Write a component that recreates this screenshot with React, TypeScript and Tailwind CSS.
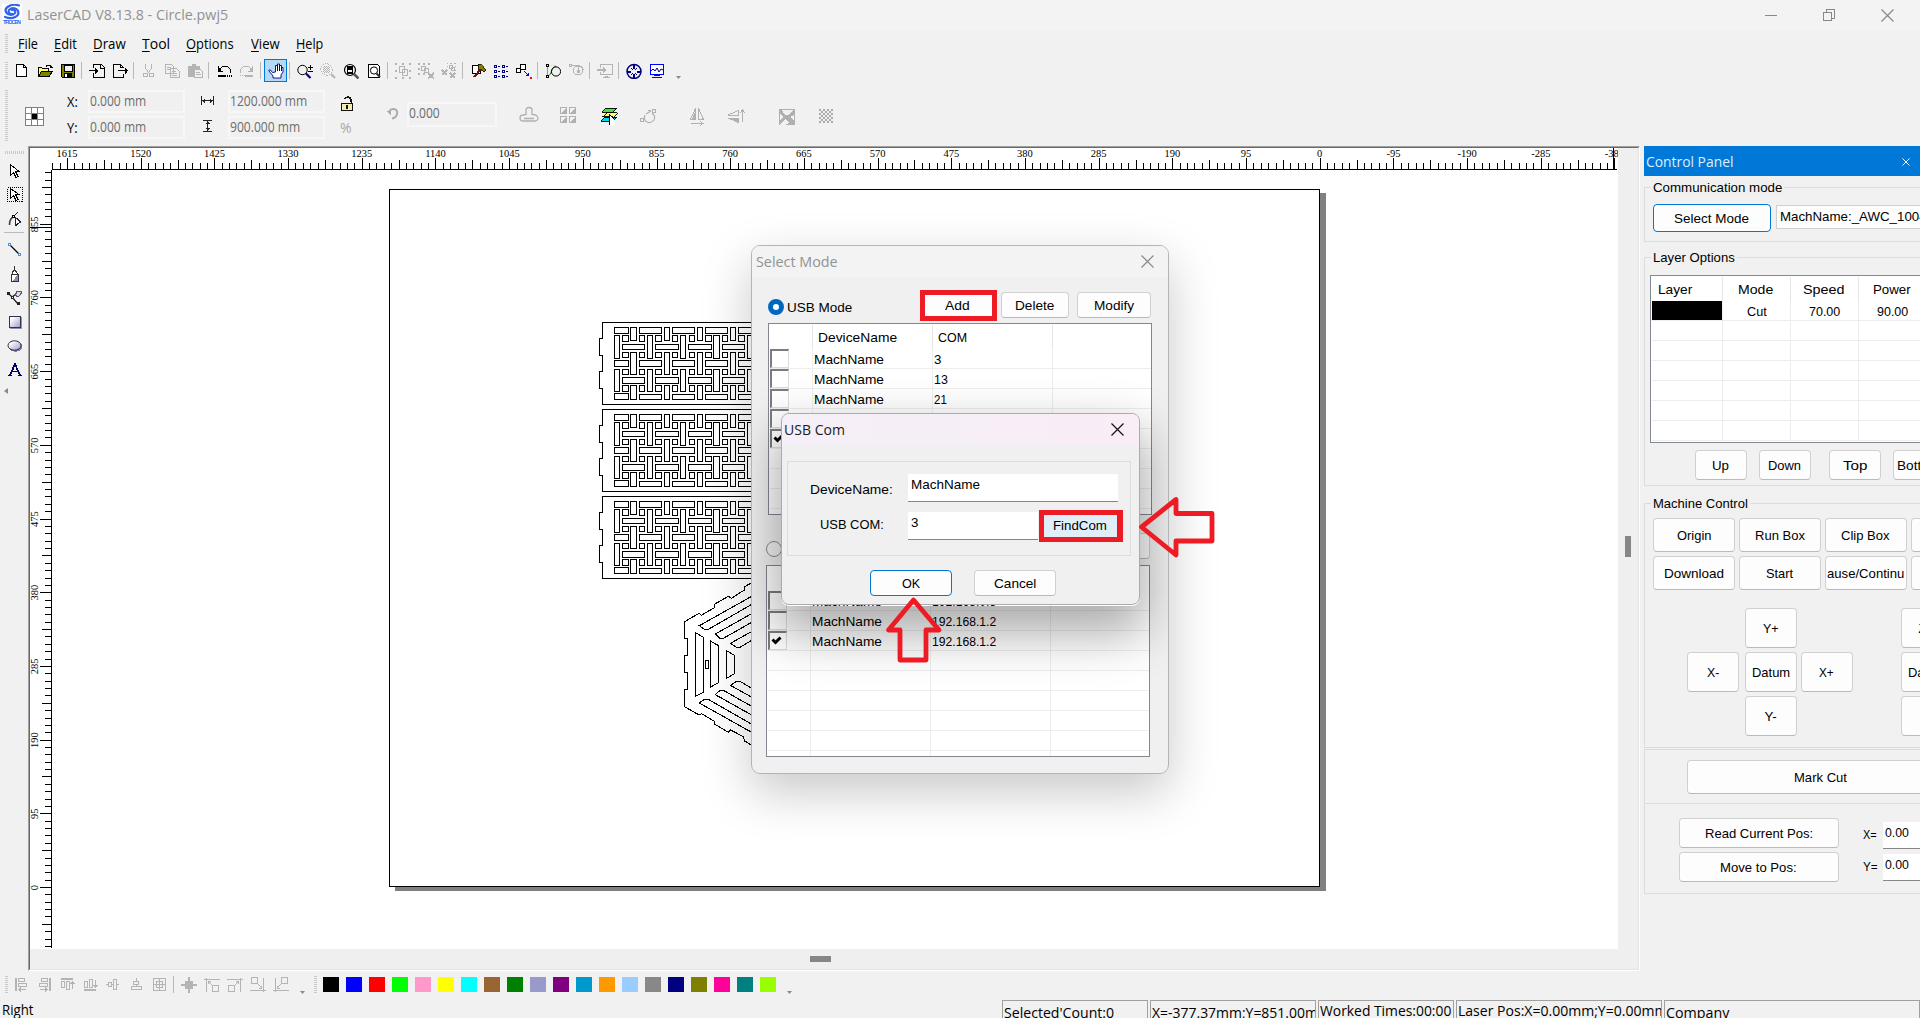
import { useLayoutEffect, useRef, useState, type ReactNode } from 'react';

const G = '#b4b4b4';
const UI = "font-['Open_Sans','Noto_Sans',sans-serif]";
const ARIAL = "font-['Liberation_Sans',Arial,sans-serif]";

/* Text condensed or widened to take exactly w pixels. */
function Fit({ w, children, className = '' }: { w: number; children: ReactNode; className?: string }) {
  const ref = useRef<HTMLSpanElement>(null);
  const [scale, setScale] = useState(1);
  useLayoutEffect(() => {
    if (ref.current && ref.current.offsetWidth) setScale(w / ref.current.offsetWidth);
  }, [w]);
  return (
    <span className={`inline-block shrink-0 whitespace-nowrap text-left ${className}`} style={{ width: w }}>
      <span ref={ref} className="inline-block origin-left" style={{ transform: `scaleX(${scale})` }}>
        {children}
      </span>
    </span>
  );
}

function Svg({ w = 16, h = 16, children, className = '' }: { w?: number; h?: number; children: ReactNode; className?: string }) {
  return (
    <svg width={w} height={h} viewBox={`0 0 ${w} ${h}`} fill="none" shapeRendering="crispEdges" className={`shrink-0 ${className}`}>
      {children}
    </svg>
  );
}

function Cell({ children, active }: { children: ReactNode; active?: boolean }) {
  return (
    <div className={active ? 'h-[23px] w-[23px] shrink-0 border border-[#0078d7] bg-[#b5d8f5] p-[3px]' : 'h-[23px] w-[23px] shrink-0 p-[4px]'}>
      {children}
    </div>
  );
}

const Sep = () => <div className="mr-[3px] ml-[2px] h-[17px] w-px shrink-0 self-center bg-[#b9b9b9]" />;

const Grip = ({ className }: { className: string }) => (
  <div className={`w-[3px] shrink-0 bg-[repeating-linear-gradient(to_bottom,#c9c9c9_0_1px,transparent_1px_2px)] ${className}`} />
);

const toolbar: (ReactNode | 'sep')[] = [
  <Svg><path d="M2.500 1.500h7l3 3v9h-10zM9.500 1.500v3h3" stroke="#000" fill="#fff" /></Svg>,
  <Svg><path d="M1.500 12.500v-8h3l1 1h6v2" stroke="#000" fill="#ffff66" /><path d="M1.500 13.500l3-5h11l-3.500 5z" fill="#808000" stroke="#000" /><path d="M9 3.500l1-1h3l1 1v1M12.500 4.500h3" stroke="#000" /></Svg>,
  <Svg><path d="M1.500 1.500h13v13h-12l-1-1z" fill="#808000" stroke="#000" /><path d="M4 2h8v6H4z" fill="#f1f1f1" stroke="#000" /><path d="M4 10h8v4H4z" fill="#000" /><path d="M5 11h2v3H5z" fill="#fff" /></Svg>,
  'sep',
  <Svg><path d="M4.500 5V1.500h8l3 3v10h-11V10M11.500 1.500v4h4" stroke="#000" /><path d="M0 7.500h9M6.500 4.500v6M7.500 5.500v4M8.500 6.500v2" stroke="#000" /></Svg>,
  <Svg><path d="M11.500 4.500l-3-3h-7v13h10v-4M8.500 1.500v3h3" stroke="#000" /><path d="M6 7.500h10M13.500 4.500v6M14.500 5.500v4" stroke="#000" /></Svg>,
  'sep',
  <Svg><path d="M4.500 1v4l2 3 2 3M10.500 1v4l-2 3-2 3" stroke={G} /><circle cx="4.500" cy="12" r="2" stroke={G} /><circle cx="10.500" cy="12" r="2" stroke={G} /></Svg>,
  <Svg><path d="M1.500 1.500h6l2 2v7h-8zM6.500 5.500h6l2.500 2.500v6.500H6.500zM3 4.500h4M3 6.500h3M8 8.500h4M8 10.500h5M8 12.500h5" stroke={G} fill="#f1f1f1" /></Svg>,
  <Svg><path d="M1 3h4V1h4v2h4v3H7v8H1z" fill={G} /><path d="M7.500 6.500h6l2 2v6h-8z" stroke={G} fill="#f1f1f1" /><path d="M9 9.500h4M9 11.500h5" stroke={G} /></Svg>,
  'sep',
  <Svg><path d="M3.500 6.500l3-3h5l3 3v3l-1 1M2.500 3v5M2 8.500h5M3.500 5v3M4.500 6v2" stroke="#000" /><path d="M2 12h8v2H2z" fill="#000" /><path d="M11 12.500h1M13 12.500h1M15 12.500h1M11 13.500h1M13 13.500h1M15 13.500h1" stroke="#000" /></Svg>,
  <Svg><path d="M12.500 6.500l-3-3h-5l-3 3v3l1 1M13.500 3v5M9 8.500h5M12.500 5v3M11.500 6v2" stroke={G} /><path d="M6 12h8v2H6z" fill={G} /><path d="M1 12.500h1M3 12.500h1M5 12.500h1" stroke={G} /></Svg>,
  'sep',
  <Svg><path d="M4.500 9.500l-2-2.500H1v1l4 5v2h8v-3l2-3V4.500h-1.500V8 2.500h-2V8 1h-2v7V2.500h-2V9z" fill="#fff" stroke="#000080" strokeWidth=".9" shapeRendering="auto" /></Svg>,
  'sep',
  <Svg w={18}><circle cx="5.500" cy="7" r="4.700" stroke="#000" shapeRendering="auto" /><path d="M9 10.500l4.500 4.500" stroke="#000080" strokeWidth="2.200" shapeRendering="auto" /><path d="M11 4.500h5M13.500 2v5M11 8.500h5" stroke="#000" /></Svg>,
  <Svg><circle cx="6.500" cy="6.500" r="5.800" stroke={G} strokeDasharray="1.500 1" /><path d="M3 4.500h7M3 6.500h7M3 8.500h7M4.500 3v7M6.500 3v7M8.500 3v7" stroke={G} strokeDasharray="1 1" /><path d="M11 11l4 4" stroke={G} strokeWidth="2.200" shapeRendering="auto" /></Svg>,
  <Svg><circle cx="7" cy="7" r="5.500" stroke="#000" strokeWidth="1.200" shapeRendering="auto" /><path d="M4.500 3.500h5v7h-5z" stroke="#000" fill="#f1f1f1" /><path d="M5 4h4v3H5zM4 9h6v1H4z" fill="#000" /><path d="M11 11l4.500 4.500" stroke="#555" strokeWidth="2.500" shapeRendering="auto" /></Svg>,
  <Svg><path d="M2.500 1.500h9l2 2v11h-11z" stroke="#000" fill="#fff" /><circle cx="8" cy="7.500" r="3.600" stroke="#000" shapeRendering="auto" /><path d="M10.500 10.500l3.500 3.500" stroke="#333" strokeWidth="2" shapeRendering="auto" /></Svg>,
  'sep',
  <Svg><path d="M0 0h2v2H0zM7 0h2v2H7zM14 0h2v2h-2zM0 7h2v2H0zM14 7h2v2h-2zM0 14h2v2H0zM7 14h2v2H7zM14 14h2v2h-2z" fill={G} /><path d="M4.500 3.500h5v6h-5zM7.500 6.500h5v6h-5z" stroke={G} /></Svg>,
  <Svg><path d="M0 0h2v2H0zM5 0h2v2H5zM10 0h2v2h-2zM0 5h2v2H0zM0 10h2v2H0zM5 10h2v2H5z" fill={G} /><path d="M3.500 3.500h4v4h-4zM6.500 5.500h4v4h-4z" stroke={G} /><path d="M10 10l6 5.500M16 10l-6 5.500" stroke={G} strokeWidth="2" /></Svg>,
  <Svg><path d="M6 0h1M9 0.500h2M13 .5h2M6 3.500h1M14 3.500h1M13 7.500h2" stroke={G} /><path d="M8.500 2.500h3v3h-3zM10.500 4.500h3v3h-3z" stroke={G} /><path d="M1 7l5 5M6 7l-5 5M9 10l5 5M14 10l-5 5" stroke={G} strokeWidth="1.500" /></Svg>,
  'sep',
  <Svg><path d="M2.500 2.500h8v8h-8z" stroke="#000" strokeWidth="1.300" fill="#fff" /><path d="M8 1h3l5 6-2 2-3-2-3 0z" fill="#808000" stroke="#000" strokeWidth=".7" /><path d="M11 6l-7 8" stroke="#701010" strokeWidth="2" /></Svg>,
  <Svg><path d="M1.500 2.500h2v2h-2zM1.500 7.500h2v2h-2zM1.500 12.500h2v2h-2zM9.500 2.500h2v2h-2zM9.500 7.500h2v2h-2zM9.500 12.500h2v2h-2z" stroke="#000080" /><path d="M5 3.500h3M5 8.500h3M5 13.500h3M13 3.500h3M13 8.500h3M13 13.500h3" stroke="#000080" strokeDasharray="2 1" /></Svg>,
  <Svg><path d="M4.500 1.500h5v5h-5zM.5 5.500h4v4h-4z" stroke="#000" fill="#fff" /><path d="M8 8l5 5M12.500 10v3M10 12.500h3" stroke="#0000ff" /><path d="M14 14h2v2h-2z" fill="red" /></Svg>,
  'sep',
  <Svg><path d="M2 2.500h8" stroke="#ff0" strokeWidth="1.500" /><path d="M2.500 3v10" stroke="#00d0f0" /><path d="M3 13C7 12 6 4 11 3" stroke="#008000" shapeRendering="auto" /><circle cx="11" cy="8.500" r="4.600" stroke="#000" shapeRendering="auto" /><path d="M1.500 1.500h2v2h-2zM1.500 12.500h2v2h-2z" stroke="#000" /></Svg>,
  <Svg><path d="M1 1h2v2H1zM3 2.500h8q4 1 4.500 5" stroke={G} /><circle cx="10" cy="7.500" r="4.500" stroke={G} /><path d="M10.500 3v6M9 7.500h3" stroke={G} /><path d="M9 7h3v3H9z" fill={G} /></Svg>,
  'sep',
  <Svg><path d="M3.500 5V1.500h12v10H3.500V9M6 14.500h7M8 13.500h3" stroke={G} /><path d="M0 7h7" stroke={G} strokeWidth="2" /><path d="M6 4l4 3-4 3z" fill={G} /></Svg>,
  'sep',
  <Svg><circle cx="8" cy="8.500" r="7" stroke="#000080" strokeWidth="1.500" shapeRendering="auto" /><path d="M8 1v5M8 11v5M1 8.500h4M11 8.500h4" stroke="#000080" strokeWidth="2" /><path d="M5 5l2 2M11 5L9 7M5 12l2-2M11 12l-2-2" stroke="#000080" /></Svg>,
  <Svg><path d="M1.500 1.500h13v10h-13z" stroke="#0000ff" fill="#fff" /><path d="M2 8l2-2 2 2 2-3 2 4 2-3 2 1" stroke="#000080" shapeRendering="auto" /><path d="M5 12h6v1H5zM3 14h10v1H3z" fill="#0000ff" /></Svg>,
];

const Drop = ({ className }: { className: string }) => (
  <svg width="5" height="3" viewBox="0 0 5 3" className={`shrink-0 ${className}`}><path d="M0 0h5L2.500 3z" fill="#8a8a8a" /></svg>
);

function Field({ children, className }: { children: ReactNode; className: string }) {
  return <div className={`flex items-center border-2 border-[#f7f7f7] bg-[#f0f0f0] text-[14px] leading-none text-[#6d6d6d] ${className}`}>{children}</div>;
}

function PropertyBar() {
  return (
    <div className={`flex h-[62px] shrink-0 ${UI} text-[14px]`}>
      <Grip className="mt-[6px] ml-[5px] h-[52px]" />
      <Svg w={19} h={19} className="mt-[23px] ml-[17px]">
        <path d="M.5.5h18v18H.5zM.5 6.500h18M.5 12.500h18M6.500.5v18M12.500.5v18" stroke="#808080" fill="#fff" />
        <path d="M7 7h5v5H7z" fill="#000" />
      </Svg>
      <div className="mt-[4px] ml-[23px] w-[21px] text-black">
        <div className="flex h-[26px] items-center"><Fit w={11}>X:</Fit></div>
        <div className="flex h-[26px] items-center"><Fit w={11}>Y:</Fit></div>
      </div>
      <div className="mt-[6px] flex flex-col gap-[3px]">
        <Field className="h-[23px] w-[97px] pb-[2px]"><Fit w={56}>0.000 mm</Fit></Field>
        <Field className="h-[23px] w-[97px] pb-[2px]"><Fit w={56}>0.000 mm</Fit></Field>
      </div>
      <div className="ml-[16px] w-[27px]">
        <Svg w={13} h={12} className="mt-[11px]"><path d="M.5 1v9M12.500 1v9M1 5.500h11M3.500 3.500v4M2.500 4.500v2M9.500 3.500v4M10.500 4.500v2" stroke="#222" /></Svg>
        <Svg w={13} h={12} className="mt-[13px]"><path d="M2 .5h9M2 11.500h9M6.500 1v10M5.500 2.500h2M4.500 3.500h4M5.500 9.500h2M4.500 8.500h4" stroke="#222" /></Svg>
      </div>
      <div className="mt-[6px] flex flex-col gap-[3px]">
        <Field className="h-[23px] w-[97px] pb-[2px]"><Fit w={77}>1200.000 mm</Fit></Field>
        <Field className="h-[23px] w-[97px] pb-[2px]"><Fit w={70}>900.000 mm</Fit></Field>
      </div>
      <div className="ml-[15px] w-[46px]">
        <Svg w={14} h={16} className="mt-[12px]">
          <path d="M4.500 3.500q1-2.500 4-2.500 3 1 2.500 5.500" stroke="#111" strokeWidth="1.500" />
          <path d="M1.500 7.500h11v7h-11z" stroke="#111" strokeWidth="1.400" fill="#f4ecb0" />
          <path d="M6 9h2v4H6z" fill="#111" />
        </Svg>
        <div className="mt-[6px] text-[14px] leading-[20px] text-[#a8a8a8]">%</div>
      </div>
      <Svg w={13} h={13} className="mt-[23px]"><path d="M3 4.500q2-3 5-2.500 4 1 3 5-1 4-5 4.500" stroke="#adadad" strokeWidth="2" shapeRendering="auto" /><path d="M0 4h5v4z" fill="#adadad" /></Svg>
      <Field className="mt-[18px] ml-[8px] h-[25px] w-[90px] pb-[4px]"><Fit w={31}>0.000</Fit></Field>
      <Svg w={20} h={18} className="mt-[22px] ml-[22px]"><path d="M7 8.500V4q0-2.500 3-2.500T13 4v4.500l4 .5q2 1 2 4-1 2-3 2H4q-3 0-3-3t3-3zM5 12.500h10" stroke="#b0b0b0" strokeWidth="1.300" shapeRendering="auto" /></Svg>
      <Svg w={17} h={17} className="mt-[23px] ml-[21px]"><path d="M.5.5h6v6h-6zM9.500.5h6v6h-6zM.5 9.500h6v6h-6zM9.500 9.500h6v6h-6z" stroke="#b0b0b0" /><path d="M6 1v5H1zM15 1v5h-5zM6 10v5H1zM15 10v5h-5z" fill="#b0b0b0" /></Svg>
      <Svg w={17} h={20} className="mt-[23px] ml-[24px]"><path d="M0 14l4-4h12l-4 4z" fill="#00d8f0" stroke="#000" strokeWidth=".9" /><path d="M1 9.500l4-4h11l-4 4z" fill="#ff6" stroke="#000" strokeWidth=".9" /><path d="M1 5l4-4h11l-4 4z" fill="#4be04b" stroke="#000" strokeWidth=".9" /><path d="M9 8l5 6v4H9z" fill="#fff" /><path d="M8.500 7v11M9 8l4 4" stroke="#000" /></Svg>
      <Svg w={17} h={18} className="mt-[23px] ml-[22px]"><path d="M.5 11.500h3v3h-3zM12.500 2.500h3v3h-3z" stroke="#b0b0b0" /><path d="M6 7l5-3M8 3.500h3M12 6q4 3 2 7-3 4-7 2-4-2-2-7" stroke="#b0b0b0" strokeWidth="1.200" shapeRendering="auto" /></Svg>
      <Svg w={17} h={19} className="mt-[23px] ml-[32px]"><path d="M6.500 1.500v11h-5zM9.500 1.500v11h5z" stroke="#b0b0b0" /><path d="M6 5v7H3z" fill="#b0b0b0" /><path d="M2 16.500h11M11 14.500l3 2-3 2" stroke="#b0b0b0" /></Svg>
      <Svg w={18} h={18} className="mt-[24px] ml-[21px]"><path d="M11.500 2.500v4.500H1zM11.500 14.500v-4.500H1z" stroke="#b0b0b0" /><path d="M11 11v3L4 11z" fill="#b0b0b0" /><path d="M15.500 2v12M13 5l2.500-3L18 5" stroke="#b0b0b0" /></Svg>
      <Svg w={16} h={16} className="mt-[25px] ml-[34px]"><path d="M0 0h16v16H0z" fill="#b0b0b0" /><path d="M3 1h11l-5 5-3 0zM1 4l3 4-3 3zM6 10l4 4-4 2H1zM15 6v6l-4-4z" fill="#f1f1f1" /></Svg>
      <Svg w={15} h={15} className="mt-[25px] ml-[24px]">
        {Array.from({ length: 7 }, (_, j) => Array.from({ length: 7 }, (_, i) => ((i + j) % 2 ? null : <path key={`${i}-${j}`} d={`M${i * 2} ${j * 2}h2v2h-2z`} fill="#aaa" />)))}
      </Svg>
    </div>
  );
}

const sideTools: ReactNode[] = [
  <Svg><path d="M3.500 1.500v11l3-3 2.500 5 2-1-2.500-5h3.500z" stroke="#000" fill="#fff" /></Svg>,
  <Svg><path d="M3.500 1.500v10l3-3 2.500 5 2-1-2.500-5h3.500z" stroke="#000" fill="#fff" /><path d="M.5.5h15v14H.5z" stroke="#000" strokeDasharray="1 1" /></Svg>,
  <Svg><path d="M2.500 14q0-7 5-9" stroke="#445" strokeWidth="1.600" shapeRendering="auto" /><path d="M5 7l6-6" stroke="#222" shapeRendering="auto" /><path d="M5.500 4.500h2v2h-2z" stroke="#000" fill="#fff" /><path d="M8.500 6.500v8l5-3.500z" stroke="#223" fill="#fff" strokeWidth="1.300" /></Svg>,
  <Svg><path d="M3 3l10 10" stroke="#000" strokeWidth="1.300" shapeRendering="auto" /><path d="M1.500 1.500h2v2h-2zM11.500 11.500h2v2h-2z" stroke="#4d8fd0" fill="#fff" /></Svg>,
  <Svg><path d="M7.500 0v4M6.500 4.500h2l3 5v6h-7v-6z" stroke="#333" fill="#fff" strokeWidth="1.200" /><path d="M6 15l5-7v7z" fill="#8a8ab8" /><path d="M4 8.500h7" stroke="#333" /></Svg>,
  <Svg><path d="M1 3l4 4 6 7M5 7l4-3" stroke="#222" shapeRendering="auto" strokeWidth="1.200" /><path d="M0 2h3v3H0zM10 12h3v3h-3z" fill="#222" /><path d="M9.500 1.500h5l-1 4-3 1-2-1z" stroke="#555577" fill="#ddd" /><path d="M4.500 6.500h2v2h-2z" stroke="#222" fill="#fff" /></Svg>,
  <Svg><defs><linearGradient id="sq" x1="0" y1="0" x2="1" y2="1"><stop offset=".2" stopColor="#fff" /><stop offset="1" stopColor="#9a9ac8" /></linearGradient></defs><path d="M3 3h12v12H3z" fill="#8f8fb8" /><path d="M2.500 2.500h11v11h-11z" stroke="#333348" fill="url(#sq)" /></Svg>,
  <Svg><ellipse cx="8.500" cy="8.500" rx="7" ry="5.200" fill="#8080b0" /><ellipse cx="7.500" cy="7.500" rx="6.500" ry="4.700" stroke="#2b2b40" fill="url(#sq)" shapeRendering="auto" /></Svg>,
  <Svg><path d="M3 13.500L8 2l5 11.500M5 9.500h6M1 13.500h4M11 13.500h4" stroke="#00006a" strokeWidth="1.800" /></Svg>,
];

function SideBar() {
  return (
    <div className="flex w-[28px] shrink-0 flex-col items-center pt-[5px]">
      <div className="h-[3px] w-[19px] bg-[repeating-linear-gradient(to_right,#c9c9c9_0_1px,transparent_1px_2px)]" />
      <div className="mt-[9px] flex flex-col gap-[8px]">{sideTools.slice(0, 3).map((t, i) => <div key={i} className="h-[16px] pl-[1px]">{t}</div>)}</div>
      <div className="mt-[5px] h-px w-[20px] bg-[#b9b9b9]" />
      <div className="mt-[9px] flex flex-col gap-[8px]">{sideTools.slice(3).map((t, i) => <div key={i} className="h-[16px] pl-[1px]">{t}</div>)}</div>
      <svg width="4" height="6" viewBox="0 0 4 6" className="mt-[10px] mr-[17px]"><path d="M4 0v6L0 3z" fill="#8a8a8a" /></svg>
    </div>
  );
}

const STEP = 73.69;
const px = (v: number) => Math.round(v) + 0.5;

function Rulers() {
  const h: ReactNode[] = [];
  for (let k = -2; k <= 210; k++) {
    const x = 67 + (k * STEP) / 10;
    if (x > 1616) break;
    const y = k % 10 === 0 ? 158 : k % 5 === 0 ? 160 : 163;
    h.push(<path key={k} d={`M${px(x)} ${y}V169`} />);
  }
  const v: ReactNode[] = [];
  for (let k = -8; k <= 97; k++) {
    const y = 887 - (k * STEP) / 10;
    const x = k % 10 === 0 ? 40 : k % 5 === 0 ? 42 : 45;
    v.push(<path key={k} d={`M${x} ${px(y)}H51`} />);
  }
  return (
    <g>
      <g stroke="#000">
        {h}
        {v}
        <path d="M52 169.500H1617M51.500 170V948M30 227.500H51M1613.500 148V169" />
      </g>
      <g fill="#000" fontSize="10.500" textAnchor="middle" className="font-['Liberation_Serif','Times_New_Roman',serif]">
        {Array.from({ length: 22 }, (_, k) => (
          <text key={k} x={67 + k * STEP} y="157">{1615 - k * 95}</text>
        ))}
        {Array.from({ length: 10 }, (_, k) => (
          <text key={k} transform={`translate(38 ${887.5 - k * STEP}) rotate(-90)`}>{k * 95}</text>
        ))}
      </g>
    </g>
  );
}

/* One woven side panel; coordinates are relative to its upper left corner. */
function Weave({ y }: { y: number }) {
  const out: ReactNode[] = [];
  const X = (c: number) => 14.5 + c * 16.62;
  const Y = (r: number) => 7.8 + r * 16.67;
  const box = (x0: number, y0: number, x1: number, y1: number) =>
    out.push(<path key={out.length} d={`M${px(x0)} ${px(y0)}H${px(x1)}V${px(y1)}H${px(x0)}z`} />);
  for (let c = 0; c < 9; c++) {
    if (c % 2 === 0) {
      box(X(c) - 2.8, Y(0) + 5, X(c) + 2.5, Y(2) - 5.5);
      box(X(c) - 2.8, Y(2) + 5.5, X(c) + 2.5, Y(4) - 5.5);
    } else {
      box(X(c) - 2.8, Y(0) - 3, X(c) + 2.5, Y(1) - 6);
      box(X(c) - 2.8, Y(1) + 5.5, X(c) + 2.5, Y(3) - 5.5);
      box(X(c) - 2.8, Y(3) + 5.5, X(c) + 2.5, Y(4) + 3);
    }
    for (let r = 0; r < 5; r++) {
      if (c === 0 && r % 2 === 0) box(X(0) - 2.8, Y(r) - 3, X(0) + 11.4, Y(r) + 2.7);
      else if ((c + r) % 2 === 0) box(X(c) - 11.2, Y(r) - 2.8, X(c) + 11.2, Y(r) + 2.7);
      if (r < 4) box(X(c) + 5.6, Y(r) + 5.6, X(c) + 11, Y(r) + 11);
    }
  }
  return (
    <g transform={`translate(602 ${y})`} stroke="#000" fill="none">
      <path d="M170 .5H.5V16.500H-2.500V33.500H.5V49.500H-2.500V66.500H.5V82.500H170" />
      {out}
    </g>
  );
}

function Hexagon() {
  const slots = (
    <g>
      <path d="M300 65L118 167L133 178H145L300 89" />
      <path d="M300 117L166 192L180 205H190L300 143" />
      <path d="M300 171L211 220L230 232H240L300 196" />
    </g>
  );
  return (
    <g transform="translate(660 570) scale(.33333)" stroke="#000" strokeWidth="3.300" fill="none">
      <path d="M290 32L262 45L253 52V60L214 85L205 79L165 102L163 113L124 136L117 130L74 155V206H83V256H74V307H83V359H74V410L117 435L125 431L163 454L165 463L205 487L212 480L250 500L254 513L290 535" />
      <path d="M106.500 188L130.500 202V367L106.500 379zM151.500 213L175.500 227V338L151.500 351zM199.500 242L223.500 256V311L199.500 325zM136 271h10v25h-10z" />
      {slots}
      <g transform="matrix(1 0 0 -1 0 566)">{slots}</g>
    </g>
  );
}

function Workspace() {
  return (
    <div className="h-[825px] w-[1612px] shrink-0 border-t border-r border-b border-l border-t-[#a0a0a0] border-r-white border-b-white border-l-[#a0a0a0]">
      <div className="flex h-full flex-col border border-t-[#696969] border-r-[#e3e3e3] border-b-[#e3e3e3] border-l-[#696969]">
        <div className="flex h-[801px]">
          <svg width="1588" height="801" viewBox="30 148 1588 801" shapeRendering="crispEdges" className="shrink-0 bg-white">
            <path d="M395 887H1320V193H1326V891H395z" fill="#808080" />
            <path d="M389.500 189.500H1319.500V886.500H389.500z" fill="#fff" stroke="#000" />
            <Weave y={322} />
            <Weave y={409} />
            <Weave y={496} />
            <Hexagon />
            <Rulers />
          </svg>
          <div className="flex grow justify-center bg-[#efefef] pt-[388px]"><div className="h-[21px] w-[6px] bg-[#868686]" /></div>
        </div>
        <div className="grow bg-[#efefef] pt-[7px] pl-[780px]"><div className="h-[6px] w-[21px] bg-[#868686]" /></div>
      </div>
    </div>
  );
}

function Btn({ children, className, w, blue }: { children?: ReactNode; className: string; w?: number; blue?: boolean }) {
  return (
    <div className={`flex shrink-0 items-center justify-center overflow-hidden rounded-[4px] border bg-[#fdfdfd] pt-[2px] pr-[1px] text-[13.300px] leading-none text-black ${blue ? 'border-[#0078d4]' : 'border-[#d0d0d0] border-b-[#bababa]'} ${className}`}>
      {w ? <Fit w={w}>{children}</Fit> : children}
    </div>
  );
}

function Group({ title, w, children, className }: { title?: string; w?: number; children: ReactNode; className: string }) {
  return (
    <div className={`w-[400px] shrink-0 border border-[#dcdcdc] ${className}`}>
      {title && <div className="-mt-[9px] ml-[6px] flex h-[16px] w-fit items-center bg-[#f0f0f0] px-[2px] pt-[2px] leading-none"><Fit w={w ?? 0}>{title}</Fit></div>}
      {children}
    </div>
  );
}

function LayerTable() {
  const row = 'grid grid-cols-[71px_68px_68px_68px]';
  return (
    <div className="mt-[10px] ml-[5px] h-[168px] w-[380px] border border-[#828790] bg-white pt-[1px] pl-[1px]">
      <div className={`${row} h-[24px] leading-[25px]`}>
        <div className="border-r border-[#e5e5e5] pl-[6px]"><Fit w={34}>Layer</Fit></div>
        <div className="border-r border-[#e5e5e5] pl-[15px]"><Fit w={35}>Mode</Fit></div>
        <div className="border-r border-[#e5e5e5] pl-[12px]"><Fit w={41}>Speed</Fit></div>
        <div className="pl-[14px]"><Fit w={38}>Power</Fit></div>
      </div>
      {Array.from({ length: 7 }, (_, i) => (
        <div key={i} className={`${row} h-[20px] border-b border-[#ededed] text-center leading-[21px]`}>
          <div className={i === 0 ? 'h-[19px] border-r border-[#ededed] bg-black' : 'border-r border-[#ededed]'} />
          <div className="border-r border-[#ededed]">{i === 0 && <Fit w={20}>Cut</Fit>}</div>
          <div className="border-r border-[#ededed]">{i === 0 && <Fit w={31}>70.00</Fit>}</div>
          <div className="border-r border-[#ededed]">{i === 0 && <Fit w={31}>90.00</Fit>}</div>
        </div>
      ))}
    </div>
  );
}

function ControlPanel() {
  return (
    <div className={`ml-[4px] flex w-[276px] shrink-0 flex-col overflow-hidden text-[13.300px] text-black ${ARIAL}`}>
      <div className={`flex h-[30px] w-[276px] shrink-0 items-center justify-between bg-[#0078d7] pt-[1px] pr-[10px] pl-[2px] text-[14.500px] text-[#dcefff] ${UI}`}>
        <Fit w={87}>Control Panel</Fit>
        <Svg w={8} h={8}><path d="M.5.5l7 7M7.500.5l-7 7" stroke="#fff" shapeRendering="auto" /></Svg>
      </div>
      <Group title="Communication mode" w={129} className="mt-[11px] h-[55px]">
        <div className="mt-[9px] ml-[8px] flex">
          <Btn blue className="h-[28px] w-[118px]" w={75}>Select Mode</Btn>
          <div className="mt-[1px] ml-[5px] flex h-[24px] w-[170px] items-center border border-[#d0d0d0] bg-[#fdfdfd] pl-[3px]"><Fit w={147}>MachName:_AWC_1004</Fit></div>
        </div>
      </Group>
      <Group title="Layer Options" w={82} className="mt-[15px] h-[229px]">
        <LayerTable />
        <div className="mt-[7px] ml-[50px] flex">
          <Btn className="h-[30px] w-[52px]" w={17}>Up</Btn>
          <Btn className="ml-[12px] h-[30px] w-[52px]" w={33}>Down</Btn>
          <Btn className="ml-[18px] h-[30px] w-[52px]" w={24}>Top</Btn>
          <Btn className="ml-[12px] h-[30px] w-[52px]" w={43}>Bottom</Btn>
        </div>
      </Group>
      <Group title="Machine Control" w={95} className="mt-[17px] h-[245px]">
        <div className="mt-[7px] ml-[8px] flex gap-[4px]">
          <Btn className="h-[34px] w-[82px]" w={34}>Origin</Btn>
          <Btn className="h-[34px] w-[82px]" w={50}>Run Box</Btn>
          <Btn className="h-[34px] w-[82px]" w={49}>Clip Box</Btn>
          <Btn className="h-[34px] w-[82px]" />
        </div>
        <div className="mt-[4px] ml-[8px] flex gap-[4px]">
          <Btn className="h-[34px] w-[82px]" w={60}>Download</Btn>
          <Btn className="h-[34px] w-[82px]" w={27}>Start</Btn>
          <Btn className="h-[34px] w-[82px]" w={77}>ause/Continu</Btn>
          <Btn className="h-[34px] w-[82px]" />
        </div>
        <div className="mt-[18px] ml-[100px] flex gap-[104px]">
          <Btn className="h-[40px] w-[52px]" w={16}>Y+</Btn>
          <Btn className="h-[40px] w-[52px]" w={16}>Z+</Btn>
        </div>
        <div className="mt-[4px] ml-[42px] flex">
          <Btn className="h-[40px] w-[52px]" w={12}>X-</Btn>
          <Btn className="ml-[6px] h-[40px] w-[52px]" w={38}>Datum</Btn>
          <Btn className="ml-[4px] h-[40px] w-[52px]" w={15}>X+</Btn>
          <Btn className="ml-[48px] h-[40px] w-[52px]" w={38}>Datum</Btn>
        </div>
        <div className="mt-[4px] ml-[100px] flex gap-[104px]">
          <Btn className="h-[40px] w-[52px]" w={12}>Y-</Btn>
          <Btn className="h-[40px] w-[52px]" w={12}>Z-</Btn>
        </div>
      </Group>
      <Group className="mt-[1px] h-[54px] border-b-0">
        <Btn className="mt-[10px] ml-[42px] h-[34px] w-[267px]" w={53}>Mark Cut</Btn>
      </Group>
      <Group className="h-[91px]">
        <div className="mt-[14px] ml-[34px] flex">
          <div className="flex flex-col gap-[4px]">
            <Btn className="h-[30px] w-[160px]" w={108}>Read Current Pos:</Btn>
            <Btn className="h-[30px] w-[160px]" w={77}>Move to Pos:</Btn>
          </div>
          <div className="mt-[9px] ml-[24px] flex w-[20px] flex-col gap-[16px] leading-[16px]"><Fit w={14}>X=</Fit><Fit w={15}>Y=</Fit></div>
          <div className="mt-[4px] flex flex-col gap-[5px] leading-[21px]">
            <div className="h-[27px] w-[80px] border-b border-[#868686] bg-white pl-[2px]"><Fit w={24}>0.00</Fit></div>
            <div className="h-[27px] w-[80px] border-b border-[#868686] bg-white pl-[2px]"><Fit w={24}>0.00</Fit></div>
          </div>
        </div>
      </Group>
    </div>
  );
}

const A = '#b4b4b4';
const aligns: (ReactNode | 'sep')[] = [
  <Svg><path d="M2 1v13" stroke={A} strokeWidth="2" /><path d="M4.500 1.500h6v3h-6zM4.500 6.500h8v3h-8zM5 12.500h7M7 10.500l-2 2 2 2" stroke={A} /></Svg>,
  <Svg><path d="M13 1v13" stroke={A} strokeWidth="2" /><path d="M4.500 1.500h6v3h-6zM2.500 6.500h8v3h-8zM3 12.500h7M8 10.500l2 2-2 2" stroke={A} /></Svg>,
  <Svg><path d="M1 2h12" stroke={A} strokeWidth="2" /><path d="M1.500 4.500h3v6h-3zM6.500 4.500h3v8h-3zM12.500 5v7M10.500 7l2-2 2 2" stroke={A} /></Svg>,
  <Svg><path d="M1 13h12" stroke={A} strokeWidth="2" /><path d="M1.500 4.500h3v6h-3zM6.500 2.500h3v8h-3zM12.500 3v7M10.500 8l2 2 2-2" stroke={A} /></Svg>,
  <Svg><path d="M2.500 5.500h3v4h-3zM7.500 2.500h3v10h-3zM0 7.500h3M5 7.500h3M10 7.500h3" stroke={A} strokeWidth="1.300" /></Svg>,
  <Svg><path d="M4.500 4.500h5v3h-5zM2.500 9.500h10v3h-10zM7.500 1v4M7.500 7v3" stroke={A} strokeWidth="1.300" /></Svg>,
  <Svg><path d="M1.500 1.500h12v12h-12zM4.500 4.500h6v6h-6zM7.500 2v11M2 7.500h11" stroke={A} /></Svg>,
  'sep',
  <Svg><path d="M4 4h8v8H4zM7 0h2v16H7zM0 7h16v2H0z" fill={A} /></Svg>,
  <Svg><path d="M0 2.500h16M2.500 1v14M8.500 8.500h6v6h-6zM4 4l4 4M4.500 7V4.500H7" stroke={A} /></Svg>,
  <Svg><path d="M0 2.500h16M13.500 1v14M1.500 8.500h6v6h-6zM12 4l-4 4M9 4.500h2.500V7" stroke={A} /></Svg>,
  <Svg><path d="M0 13.500h16M13.500 1v14M1.500.5h6v6h-6zM8 7l4 4M9 11.500h2.500V9" stroke={A} /></Svg>,
  <Svg><path d="M0 13.500h16M2.500 1v14M8.500.5h6v6h-6zM8 7l-4 4M7 11.500H4.500V9" stroke={A} /></Svg>,
];

const swatches = [
  'bg-black', 'bg-[#0000ff]', 'bg-[#ff0000]', 'bg-[#00ff00]', 'bg-[#ff99cc]', 'bg-[#ffff00]', 'bg-[#00ffff]', 'bg-[#996633]', 'bg-[#008000]', 'bg-[#9999cc]',
  'bg-[#800080]', 'bg-[#0099cc]', 'bg-[#ff9900]', 'bg-[#99ccff]', 'bg-[#888888]', 'bg-[#000080]', 'bg-[#808000]', 'bg-[#ff0099]', 'bg-[#008080]', 'bg-[#99ff00]',
];

function Check({ on }: { on?: boolean }) {
  return (
    <div className="h-[19px] w-[19px] border-t-2 border-r border-b border-l-2 border-t-[#7c7c7c] border-r-[#dcdcdc] border-b-[#dcdcdc] border-l-[#7c7c7c] bg-white">
      {on && <svg width="11" height="11" viewBox="0 0 11 11" className="mt-[2px] ml-[1px]"><path d="M1.500 4.500l3 3 5-5" stroke="#000" strokeWidth="3" fill="none" /></svg>}
    </div>
  );
}

function DeviceList({ header, rows, className }: { header?: boolean; rows: { v: string; w: number; on?: boolean }[]; className: string }) {
  const row = 'grid grid-cols-[43px_120px_120px_1fr]';
  return (
    <div className={`h-[192px] w-[384px] overflow-hidden border border-[#828790] bg-white pl-[1px] text-[13.300px] ${className}`}>
      <div className={`${row} h-[25px] pt-[1px] leading-[25px]`}>
        <div className="-ml-px border-r border-[#e5e5e5]" />
        <div className="border-r border-[#e5e5e5] pl-[5px]">{header && <Fit w={79}>DeviceName</Fit>}</div>
        <div className="border-r border-[#e5e5e5] pl-[5px]">{header && <Fit w={29}>COM</Fit>}</div>
        <div />
      </div>
      {Array.from({ length: 9 }, (_, i) => (
        <div key={i} className={`${row} h-[20px] shrink-0 border-b border-[#ededed] leading-[21px]`}>
          <div className="border-r border-[#ededed]">{rows[i] && <Check on={rows[i].on} />}</div>
          <div className="border-r border-[#ededed] pl-[1px]">{rows[i] && <Fit w={70}>MachName</Fit>}</div>
          <div className="border-r border-[#ededed] pl-[1px]">{rows[i] && <Fit w={rows[i].w}>{rows[i].v}</Fit>}</div>
          <div />
        </div>
      ))}
    </div>
  );
}

const Cross = ({ c }: { c: string }) => (
  <svg width="13" height="13" viewBox="0 0 13 13" className="shrink-0"><path d="M.5.5l12 12M12.500.5l-12 12" stroke={c} strokeWidth="1.200" /></svg>
);

function SelectModeDialog() {
  return (
    <div className={`absolute top-[245px] left-[751px] h-[529px] w-[418px] overflow-hidden rounded-[9px] border border-[#b4b4b4] bg-[#f0f0f0] text-black ${ARIAL}`}>
      <div className={`flex h-[31px] items-center justify-between bg-[#f3f3f3] pr-[14px] pl-[4px] text-[14.500px] text-[#929292] ${UI}`}>
        <Fit w={82}>Select Mode</Fit>
        <Cross c="#8a8a8a" />
      </div>
      <div className="mt-[13px] ml-[16px] flex h-[31px] text-[13.300px]">
        <div className="mt-[9px] h-[16px] w-[16px] rounded-full border-[5px] border-[#0067c0] bg-white" />
        <div className="mt-[8px] ml-[3px] leading-[19px]"><Fit w={65}>USB Mode</Fit></div>
        <div className="ml-[68px] flex h-[31px] w-[77px] items-center justify-center border-[5px] border-[#ed1c24] bg-[#fdfdfd] pr-[3px]"><Fit w={25}>Add</Fit></div>
        <Btn className="mt-[2px] ml-[4px] h-[26px] w-[68px]" w={39}>Delete</Btn>
        <Btn className="mt-[2px] ml-[8px] h-[26px] w-[74px]" w={40}>Modify</Btn>
      </div>
      <DeviceList header className="mt-[2px] ml-[16px]" rows={[{ v: '3', w: 7 }, { v: '13', w: 14 }, { v: '21', w: 13 }, { v: '4', w: 7 }, { v: '5', w: 7, on: true }]} />
      <div className="mt-[18px] ml-[14px] flex h-[32px] justify-between pr-[18px]">
        <div className="mt-[8px] h-[16px] w-[16px] rounded-full border border-[#8a8a8a] bg-[#f3f3f3]" />
        <Btn className="h-[26px] w-[74px]" />
      </div>
      <DeviceList className="ml-[14px]" rows={[{ v: '192.168.0.5', w: 64 }, { v: '192.168.1.2', w: 64 }, { v: '192.168.1.2', w: 64, on: true }]} />
      <div className="absolute top-[168px] left-[29px] h-[192px] w-[359px] rounded-[8px] shadow-[0_22px_50px_6px_rgba(0,0,0,0.33)]" />
    </div>
  );
}

function UsbComDialog() {
  return (
    <div className={`absolute top-[413px] left-[781px] h-[192px] w-[359px] overflow-hidden rounded-[8px] border border-[#b0a8b0] bg-[#f0f0f0] text-[13.300px] text-black ${ARIAL}`}>
      <div className={`flex h-[31px] items-center justify-between bg-gradient-to-r from-[#f4eff8] to-[#f9edf6] pr-[15px] pl-[2px] text-[14.500px] text-[#1c1c1c] ${UI}`}>
        <Fit w={61}>USB Com</Fit>
        <Cross c="#111" />
      </div>
      <div className="mt-[16px] ml-[5px] h-[95px] w-[344px] border border-[#dcdcdc] pt-[12px]">
        <div className="flex">
          <div className="ml-[22px] w-[98px] leading-[32px]"><Fit w={83}>DeviceName:</Fit></div>
          <div className="h-[28px] w-[210px] border-b border-[#868686] bg-white pl-[3px] leading-[21px]"><Fit w={69}>MachName</Fit></div>
        </div>
        <div className="mt-[4px] flex">
          <div className="ml-[32px] w-[88px] leading-[30px]"><Fit w={64}>USB COM:</Fit></div>
          <div className="mt-[2px] h-[28px] w-[130px] border-b border-[#868686] bg-white pl-[3px] leading-[21px]"><Fit w={7}>3</Fit></div>
          <div className="ml-[1px] flex h-[32px] w-[84px] shrink-0 items-center justify-center border-[5px] border-[#ed1c24] bg-[#e0eef9] pr-[2px] leading-none shadow-[inset_-1px_0_0_#0067c0]"><Fit w={54}>FindCom</Fit></div>
        </div>
      </div>
      <div className="mt-[14px] ml-[88px] flex gap-[22px]">
        <Btn blue className="h-[26px] w-[82px]" w={18}>OK</Btn>
        <Btn className="h-[26px] w-[82px]" w={42}>Cancel</Btn>
      </div>
    </div>
  );
}

function StatusText({ children, w, className }: { children: ReactNode; w: number; className: string }) {
  return <div className={`h-[18px] shrink-0 overflow-hidden border-t border-r border-l border-[#a0a0a0] pt-[1px] pl-[1px] ${className}`}><Fit w={w}>{children}</Fit></div>;
}

const menus: [string, number, string][] = [
  ['File', 20, 'ml-[10px]'], ['Edit', 23, 'ml-[16px]'], ['Draw', 33, 'ml-[16px]'], ['Tool', 28, 'ml-[16px]'], ['Options', 48, 'ml-[16px]'], ['View', 29, 'ml-[17px]'], ['Help', 27, 'ml-[16px]'],
];

export default function App() {
  return (
    <div className="relative flex h-[1018px] w-[1920px] flex-col overflow-hidden bg-[#f1f1f1]">
      <div className={`flex h-[30px] shrink-0 items-center bg-[#f3f3f3] pl-[2px] text-[14.500px] text-[#929292] ${UI}`}>
        <svg width="20" height="20" viewBox="0 0 20 20" className="-mt-[3px] shrink-0 bg-white">
          <g fill="none" stroke="#2f62ee" strokeLinecap="round">
            <path d="M17 1.500C9-1 2 4 4 8c1 3 7 4 9 1 1-2-1-4-3-3" strokeWidth="2.200" />
            <path d="M3 13c8 3 15-1 13-6-1-3-6-4-9-1-1 2 0 4 3 4" strokeWidth="2.200" />
          </g>
          <text x="1" y="19.500" fontSize="5.500" textLength="18" fontWeight="bold" fill="#2f62ee" className="font-['Liberation_Sans',sans-serif]">TROCEN</text>
        </svg>
        <Fit w={201} className="ml-[5px]">LaserCAD V8.13.8 - Circle.pwj5</Fit>
        <div className="ml-auto flex items-center gap-[46px] pr-[26px]">
          <div className="h-px w-[12px] bg-[#888]" />
          <Svg w={12} h={12}><path d="M.5 3.500h8v8h-8zM3 3V.5h8.500V9H9" stroke="#888" /></Svg>
          <Cross c="#888" />
        </div>
      </div>
      <div className={`flex h-[27px] shrink-0 items-center text-[14.500px] text-black ${UI}`}>
        <Grip className="ml-[5px] h-[19px]" />
        {menus.map(([m, w, cls]) => (
          <Fit key={m} w={w} className={cls}><span className="underline underline-offset-2">{m[0]}</span>{m.slice(1)}</Fit>
        ))}
      </div>
      <div className="flex h-[27px] shrink-0 items-center">
        <Grip className="mr-[2px] ml-[5px] h-[18px]" />
        {toolbar.map((t, i) => (t === 'sep' ? <Sep key={i} /> : <Cell key={i} active={i === 14}>{t}</Cell>))}
        <Drop className="mt-[14px] ml-[8px]" />
      </div>
      <PropertyBar />
      <div className="flex h-[825px] shrink-0">
        <SideBar />
        <Workspace />
        <ControlPanel />
      </div>
      <div className="flex h-[27px] shrink-0 items-center">
        <Grip className="mr-[2px] ml-[5px] h-[18px]" />
        {aligns.map((t, i) => (t === 'sep' ? <Sep key={i} /> : <Cell key={i}>{t}</Cell>))}
        <Drop className="mt-[15px] ml-[8px]" />
        <Grip className="mr-[6px] ml-[9px] h-[18px]" />
        <div className="flex gap-[7px]">{swatches.map((c) => <div key={c} className={`h-[15px] w-[16px] ${c}`} />)}</div>
        <Drop className="mt-[15px] ml-[11px]" />
      </div>
      <div className={`mt-[2px] flex h-[18px] shrink-0 overflow-hidden text-[14.500px] leading-[22px] text-black ${UI}`}>
        <div className="w-[1002px] shrink-0 pl-[2px] leading-[20px]"><Fit w={32}>Right</Fit></div>
        <StatusText className="w-[146px]" w={110}>Selected'Count:0</StatusText>
        <StatusText className="ml-[2px] w-[166px]" w={179}>X=-377.37mm;Y=851.00mm</StatusText>
        <StatusText className="ml-[2px] w-[136px] leading-[18px]" w={131}>Worked Times:00:00</StatusText>
        <StatusText className="ml-[2px] w-[206px] leading-[18px]" w={209}>Laser Pos:X=0.00mm;Y=0.00mm</StatusText>
        <StatusText className="ml-[2px] w-[256px]" w={63}>Company</StatusText>
      </div>
      <div className="absolute top-[245px] left-[751px] h-[529px] w-[418px] rounded-[9px] shadow-[0_18px_50px_0_rgba(0,0,0,0.22)]" />
      <SelectModeDialog />
      <UsbComDialog />
      <svg width="340" height="170" viewBox="880 495 340 170" className="absolute top-[495px] left-[880px]" fill="none" stroke="#ed1c24" strokeWidth="4.800" strokeLinejoin="round">
        <path d="M1141.500 527L1176 499.500V513.500H1212V541H1176V555z" />
        <path d="M913.500 600L939 630H926V660H900V630H888.500z" />
      </svg>
    </div>
  );
}
